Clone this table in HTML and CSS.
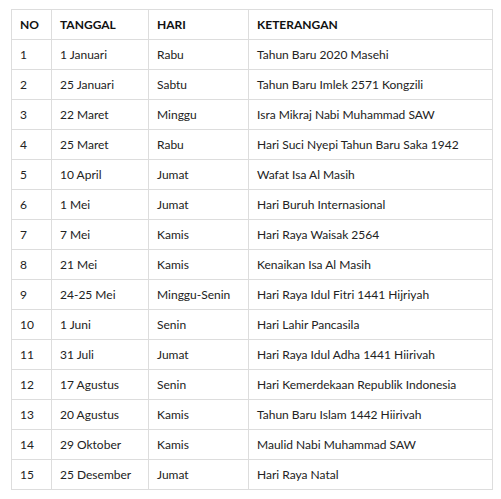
FILE: index.html
```html
<!DOCTYPE html>
<html>
<head>
<meta charset="utf-8">
<link rel="stylesheet" href="styles.css">
</head>
<body>
<table class="holidays">
  <colgroup>
    <col class="c-no">
    <col class="c-date">
    <col class="c-day">
    <col class="c-desc">
  </colgroup>
  <thead>
    <tr><th>NO</th><th>TANGGAL</th><th>HARI</th><th>KETERANGAN</th></tr>
  </thead>
  <tbody>
    <tr><td>1</td><td>1 Januari</td><td>Rabu</td><td>Tahun Baru 2020 Masehi</td></tr>
    <tr><td>2</td><td>25 Januari</td><td>Sabtu</td><td>Tahun Baru Imlek 2571 Kongzili</td></tr>
    <tr><td>3</td><td>22 Maret</td><td>Minggu</td><td>Isra Mikraj Nabi Muhammad SAW</td></tr>
    <tr><td>4</td><td>25 Maret</td><td>Rabu</td><td>Hari Suci Nyepi Tahun Baru Saka 1942</td></tr>
    <tr><td>5</td><td>10 April</td><td>Jumat</td><td>Wafat Isa Al Masih</td></tr>
    <tr><td>6</td><td>1 Mei</td><td>Jumat</td><td>Hari Buruh Internasional</td></tr>
    <tr><td>7</td><td>7 Mei</td><td>Kamis</td><td>Hari Raya Waisak 2564</td></tr>
    <tr><td>8</td><td>21 Mei</td><td>Kamis</td><td>Kenaikan Isa Al Masih</td></tr>
    <tr><td>9</td><td>24-25 Mei</td><td>Minggu-Senin</td><td>Hari Raya Idul Fitri 1441 Hijriyah</td></tr>
    <tr><td>10</td><td>1 Juni</td><td>Senin</td><td>Hari Lahir Pancasila</td></tr>
    <tr><td>11</td><td>31 Juli</td><td>Jumat</td><td>Hari Raya Idul Adha 1441 Hiirivah</td></tr>
    <tr><td>12</td><td>17 Agustus</td><td>Senin</td><td>Hari Kemerdekaan Republik Indonesia</td></tr>
    <tr><td>13</td><td>20 Agustus</td><td>Kamis</td><td>Tahun Baru Islam 1442 Hiirivah</td></tr>
    <tr><td>14</td><td>29 Oktober</td><td>Kamis</td><td>Maulid Nabi Muhammad SAW</td></tr>
    <tr><td>15</td><td>25 Desember</td><td>Jumat</td><td>Hari Raya Natal</td></tr>
  </tbody>
</table>
</body>
</html>
```
FILE: styles.css
```css
html, body {
  margin: 0;
  padding: 0;
  background: #ffffff;
}
body {
  padding: 9px 0 0 11px;
  font-family: Lato, "Open Sans", sans-serif;
  font-size: 12px;
  color: #222222;
}
.holidays {
  border-collapse: collapse;
  table-layout: fixed;
  width: 481px;
}
.c-no { width: 40px; }
.c-date { width: 97px; }
.c-day { width: 100px; }
.c-desc { width: 244px; }
.holidays th,
.holidays td {
  border: 1px solid #dddddd;
  height: 30px;
  padding: 0 0 0 8px;
  text-align: left;
  vertical-align: middle;
  white-space: nowrap;
  box-sizing: border-box;
}
.holidays th {
  font-weight: bold;
  color: #111111;
}
```
